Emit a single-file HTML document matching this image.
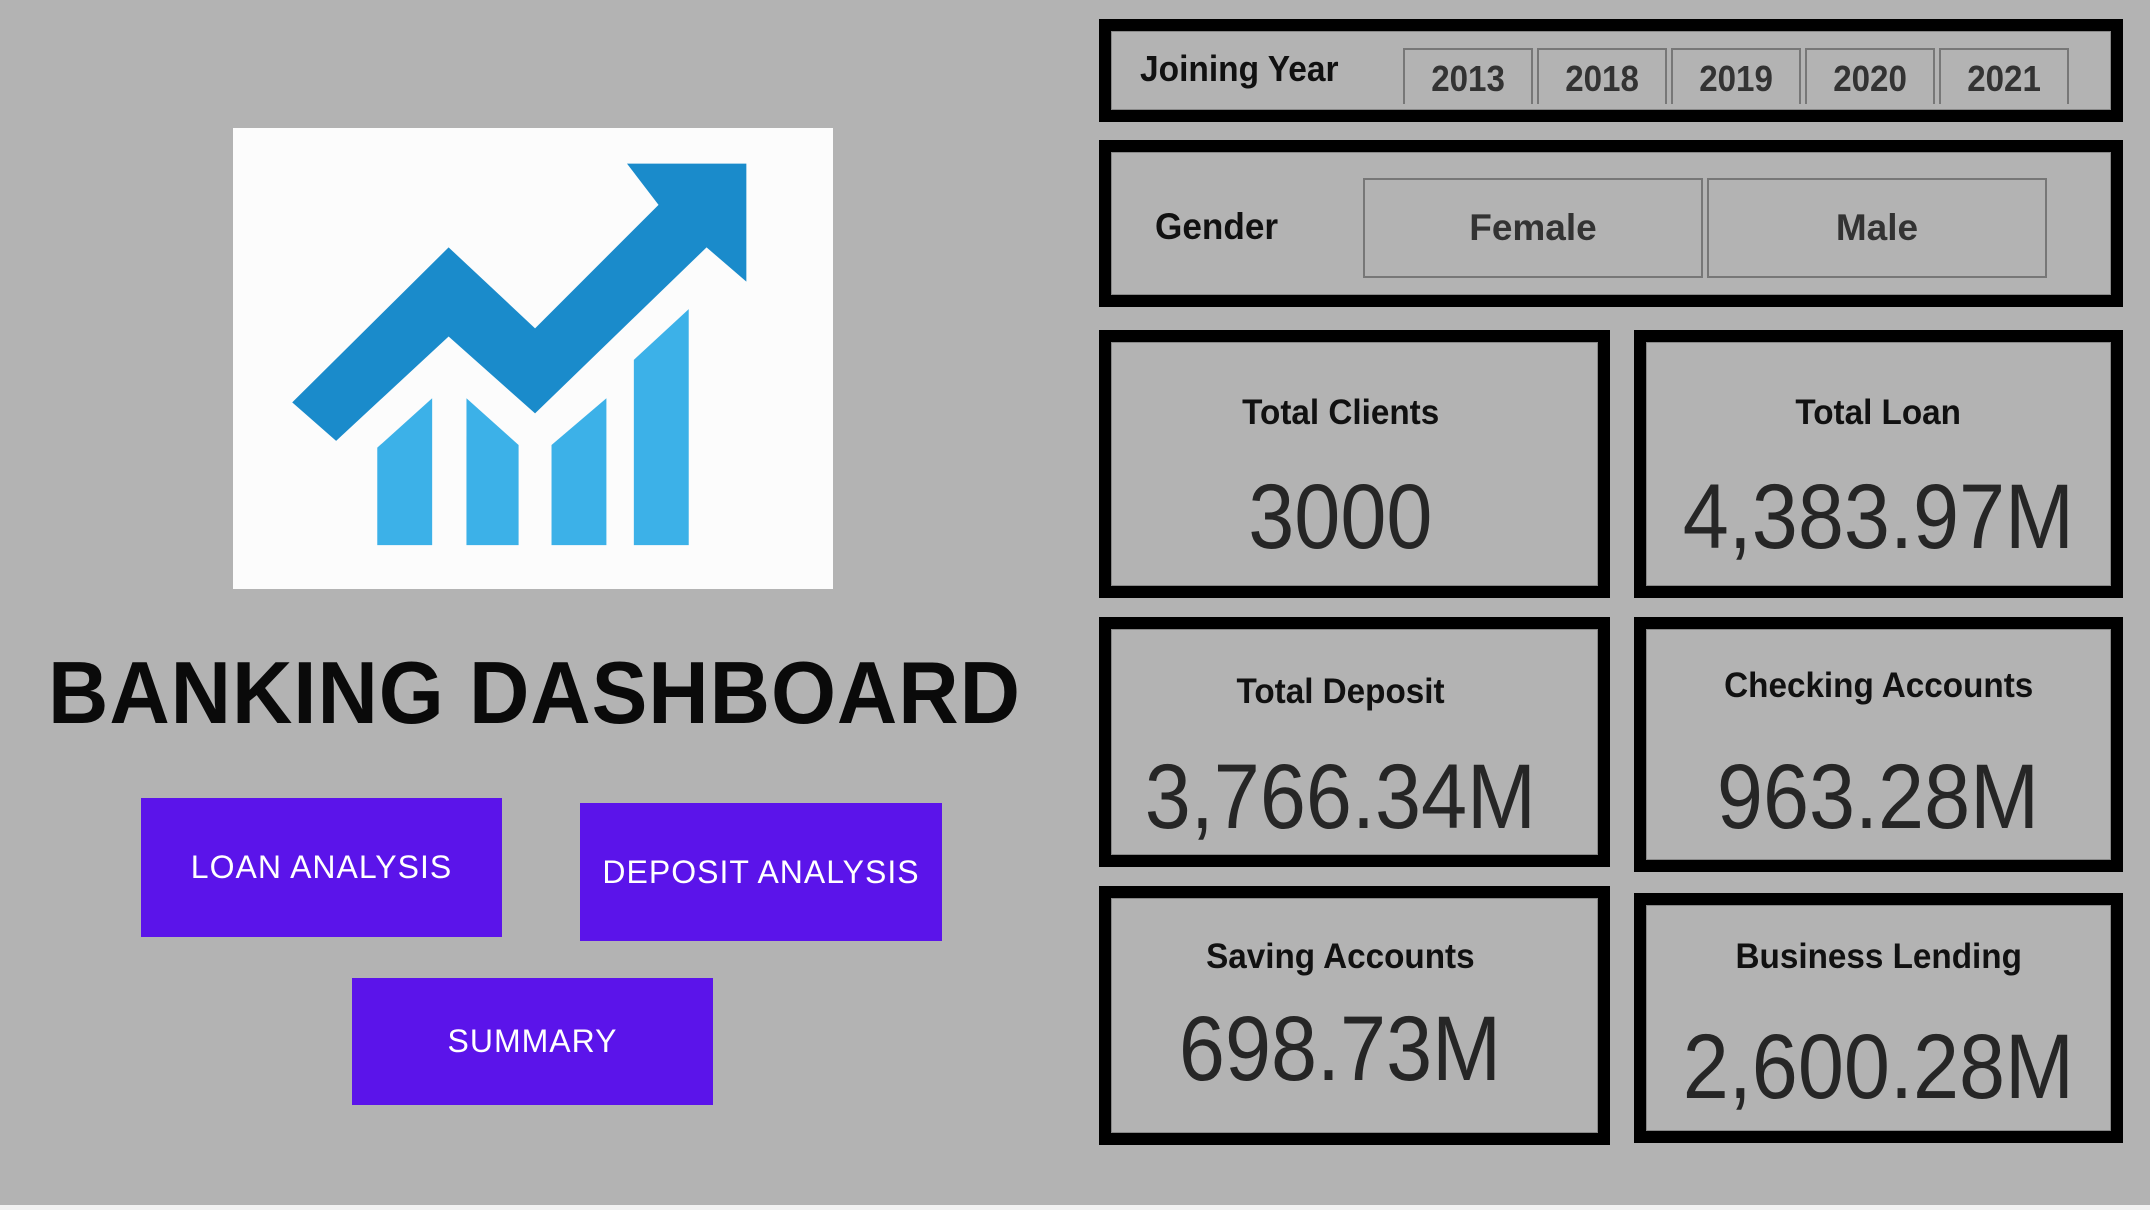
<!DOCTYPE html>
<html><head><meta charset="utf-8"><style>
*{margin:0;padding:0;box-sizing:border-box}
body{width:2150px;height:1210px;background:#b3b3b3;position:relative;overflow:hidden;font-family:"Liberation Sans",sans-serif}
.a{position:absolute}
.box{position:absolute;border:12px solid #000;outline:1px solid #888;outline-offset:-13px}
.btn{position:absolute;background:#5b14ea;color:#fff;font-size:32px;display:flex;align-items:center;justify-content:center;letter-spacing:1px}
.lbl{position:absolute;font-weight:bold;color:#111;white-space:nowrap;transform-origin:left top}
.yr{position:absolute;top:48px;height:56px;width:130px;border:2px solid #777;border-bottom:none;font-weight:bold;font-size:36px;color:#333;text-align:center;line-height:58px}
.yr span,.t span,.v span{display:inline-block}
.yr span{transform:scaleX(.92)}
.g{position:absolute;top:178px;height:100px;width:340px;border:2px solid #777;font-weight:bold;font-size:37px;color:#333;text-align:center;line-height:96px}
.t{position:absolute;width:100%;text-align:center;font-weight:bold;font-size:35px;color:#111}
.t span{transform:scaleX(.95)}
.v{position:absolute;width:100%;text-align:center;font-size:92px;color:#262626;line-height:1}
.v span{transform:scaleX(.9)}
.L .t,.L .v{left:-14px}
</style></head><body>
<div class="a" style="left:233px;top:128px;width:600px;height:461px;background:#fcfcfc"></div>
<svg class="a" style="left:233px;top:128px" width="600" height="461" viewBox="170 93 437 336">
<g fill="#3cb1e8">
<polygon points="275,326 315,290 315,397 275,397"/>
<polygon points="340,290 378,324 378,397 340,397"/>
<polygon points="402,324 442,290 442,397 402,397"/>
<polygon points="462,262 502,225 502,397 462,397"/>
</g>
<polygon fill="#1a8bcb" points="213,293 327,180 390,239 480,149 457,119 544,119 544,205 515,180 390,301 327,245 245,321"/>
</svg>
<div class="a" style="left:48px;top:648px;font-size:88px;font-weight:bold;color:#0a0a0a;letter-spacing:1px;white-space:nowrap;line-height:90px;transform:scaleX(.95);transform-origin:left top">BANKING DASHBOARD</div>
<div class="btn" style="left:141px;top:798px;width:361px;height:139px">LOAN ANALYSIS</div>
<div class="btn" style="left:580px;top:803px;width:362px;height:138px">DEPOSIT ANALYSIS</div>
<div class="btn" style="left:352px;top:978px;width:361px;height:127px">SUMMARY</div>

<div class="box" style="left:1099px;top:19px;width:1024px;height:103px"></div>
<div class="lbl" style="left:1140px;top:48px;font-size:36px;transform:scaleX(.93)">Joining Year</div>
<div class="yr" style="left:1403px"><span>2013</span></div>
<div class="yr" style="left:1537px"><span>2018</span></div>
<div class="yr" style="left:1671px"><span>2019</span></div>
<div class="yr" style="left:1805px"><span>2020</span></div>
<div class="yr" style="left:1939px"><span>2021</span></div>

<div class="box" style="left:1099px;top:140px;width:1024px;height:167px"></div>
<div class="lbl" style="left:1155px;top:206px;font-size:37px;transform:scaleX(.95)">Gender</div>
<div class="g" style="left:1363px">Female</div>
<div class="g" style="left:1707px">Male</div>

<div class="box L" style="left:1099px;top:330px;width:511px;height:268px"><div class="t" style="top:51px"><span>Total Clients</span></div><div class="v" style="top:129px"><span>3000</span></div></div>
<div class="box" style="left:1634px;top:330px;width:489px;height:268px"><div class="t" style="top:51px"><span>Total Loan</span></div><div class="v" style="top:129px"><span>4,383.97M</span></div></div>
<div class="box L" style="left:1099px;top:617px;width:511px;height:250px"><div class="t" style="top:43px"><span>Total Deposit</span></div><div class="v" style="top:122px"><span>3,766.34M</span></div></div>
<div class="box" style="left:1634px;top:617px;width:489px;height:255px"><div class="t" style="top:37px"><span>Checking Accounts</span></div><div class="v" style="top:122px"><span>963.28M</span></div></div>
<div class="box L" style="left:1099px;top:886px;width:511px;height:259px"><div class="t" style="top:39px"><span>Saving Accounts</span></div><div class="v" style="top:105px"><span>698.73M</span></div></div>
<div class="box" style="left:1634px;top:893px;width:489px;height:250px"><div class="t" style="top:32px"><span>Business Lending</span></div><div class="v" style="top:116px"><span>2,600.28M</span></div></div>
<div class="a" style="left:0;top:1205px;width:2150px;height:5px;background:#f2f2f2"></div>
</body></html>
